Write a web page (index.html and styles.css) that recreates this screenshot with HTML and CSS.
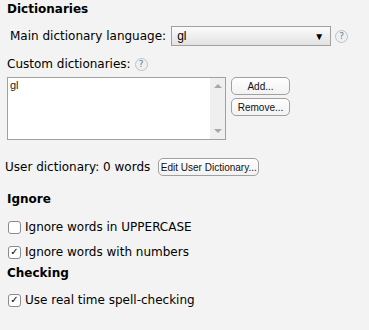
FILE: index.html
```html
<!DOCTYPE html>
<html lang="en">
<head>
<meta charset="utf-8"/>
<title>Spelling</title>
<link rel="stylesheet" href="styles.css">
</head>
<body>
<div class="panel">
    <div class="section-title">Dictionaries</div>
    <div class="lang-row">
        <span class="label">Main dictionary language:</span>
        <div class="select"><span>gl</span><span class="arrow">&#9660;</span></div>
        <span class="help">?</span>
    </div>
    <div class="custom-label">
        <span class="label">Custom dictionaries:</span>
        <span class="help">?</span>
    </div>
    <div class="custom-row">
        <div class="listbox">
            <div class="list-items">gl</div>
            <div class="scrollbar">
                <span class="scroll-up"></span>
                <span class="scroll-down"></span>
            </div>
        </div>
        <div class="list-buttons">
            <button class="btn btn-wide">Add...</button>
            <button class="btn btn-wide">Remove...</button>
        </div>
    </div>
    <div class="user-row">
        <span class="label">User dictionary: 0 words</span>
        <button class="btn">Edit User Dictionary...</button>
    </div>
    <div class="section-title ignore-title">Ignore</div>
    <label class="check first-check"><span class="box"></span>Ignore words in UPPERCASE</label>
    <label class="check"><span class="box checked">&#10003;</span>Ignore words with numbers</label>
    <div class="section-title checking-title">Checking</div>
    <label class="check last-check"><span class="box checked">&#10003;</span>Use real time spell-checking</label>
</div>
</body>
</html>
```

FILE: styles.css
```css
body {
    margin: 0;
    background: #f2f3f2;
    font-family: "DejaVu Sans", sans-serif;
    font-size: 12px;
    color: #000;
}
.panel {
    display: flex;
    flex-direction: column;
    padding: 2px 0 0 7px;
}
.section-title {
    font-weight: bold;
    font-size: 12px;
    line-height: 14px;
}
.lang-row {
    display: flex;
    align-items: center;
    margin-top: 10px;
    padding-left: 3px;
}
.label {
    line-height: 14px;
}
.select {
    display: flex;
    align-items: center;
    justify-content: space-between;
    height: 20px;
    width: 160px;
    margin-left: 5px;
    padding: 0 6px 0 5px;
    box-sizing: border-box;
    border: 1px solid #a0a0a0;
    background: linear-gradient(#fbfbfb, #e2e2e2);
    font-family: "Liberation Sans", sans-serif;
    font-size: 12px;
}
.arrow {
    font-size: 10px;
}
.help {
    display: inline-flex;
    align-items: center;
    justify-content: center;
    width: 11px;
    height: 11px;
    margin-left: 4px;
    border: 1px solid #b8c4cc;
    border-radius: 50%;
    background: #eef1f3;
    color: #707a80;
    font-size: 9px;
}
.custom-label {
    display: flex;
    align-items: center;
    margin-top: 11px;
}
.custom-row {
    display: flex;
    margin-top: 6px;
}
.listbox {
    display: flex;
    width: 219px;
    height: 63px;
    box-sizing: border-box;
    border: 1px solid #a0a0a0;
    background: #fff;
}
.list-items {
    flex: 1;
    padding: 1px 2px;
    font-family: "Liberation Sans", sans-serif;
    font-size: 11px;
    color: #222;
}
.scrollbar {
    width: 15px;
    background: #efefef;
    display: flex;
    flex-direction: column;
    justify-content: space-between;
    align-items: center;
    padding: 6px 0;
}
.scroll-up, .scroll-down {
    width: 0;
    height: 0;
    border-left: 4px solid transparent;
    border-right: 4px solid transparent;
}
.scroll-up {
    border-bottom: 4px solid #a8a8a8;
}
.scroll-down {
    border-top: 4px solid #a8a8a8;
}
.list-buttons {
    display: flex;
    flex-direction: column;
    gap: 3px;
    margin-left: 5px;
}
.btn {
    height: 18px;
    padding: 0 8px;
    border: 1px solid #a0a0a0;
    border-radius: 5px;
    background: linear-gradient(#fefefe, #f2f2f2);
    font-family: "Liberation Sans", sans-serif;
    font-size: 10px;
    color: #111;
}
.btn-wide {
    width: 59px;
    padding: 0;
}
.user-row {
    display: flex;
    align-items: center;
    margin-top: 18px;
    margin-left: -2px;
}
.user-row .btn {
    margin-left: 8px;
    width: 101px;
    padding: 0;
}
.ignore-title {
    margin-top: 16px;
}
.checking-title {
    margin-top: 7px;
}
.check {
    display: flex;
    align-items: center;
    line-height: 14px;
    margin-top: 11px;
    padding-left: 1px;
}
.first-check {
    margin-top: 14px;
}
.last-check {
    margin-top: 13px;
}
.box {
    display: inline-flex;
    align-items: center;
    justify-content: center;
    width: 11px;
    height: 11px;
    margin-right: 4px;
    border: 1px solid #8a8a8a;
    border-radius: 3px;
    background: #fff;
    font-size: 10px;
    line-height: 1;
}
```
